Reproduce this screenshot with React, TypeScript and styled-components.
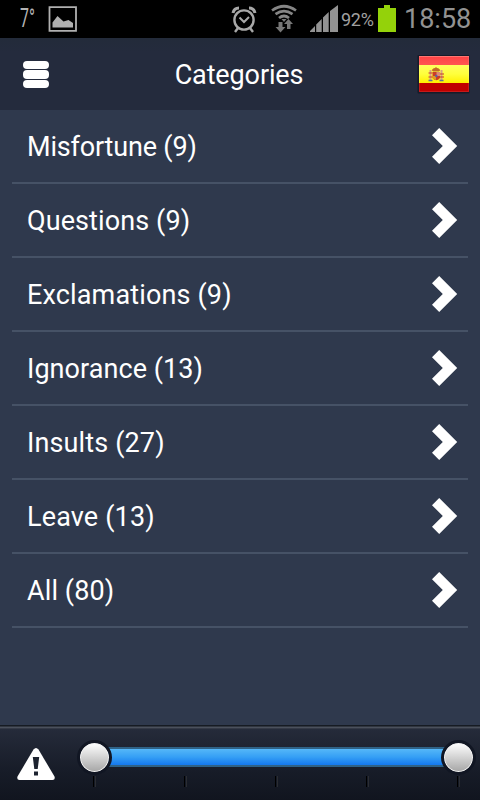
import React from 'react';
import styled, { createGlobalStyle } from 'styled-components';

const GlobalStyle = createGlobalStyle`
  * { box-sizing: border-box; }
  body { margin: 0; background: #2f394d; }
`;

const Screen = styled.div`
  width: 480px;
  height: 800px;
  display: flex;
  flex-direction: column;
  overflow: hidden;
  background: #2f394d;
  color: #fff;
  font-family: Roboto, "Liberation Sans", sans-serif;
`;

const StatusBar = styled.div`
  height: 38px;
  flex: none;
  display: flex;
  align-items: center;
  background: #000;
  color: #a0a0a0;
  svg { display: block; flex: none; }
`;

const StatusText = styled.span<{ $left: number; $width: number; $size: number; $spacing?: number }>`
  flex: none;
  margin-left: ${p => p.$left}px;
  width: ${p => p.$width}px;
  font-size: ${p => p.$size}px;
  letter-spacing: ${p => p.$spacing ?? 0}px;
  line-height: 36px;
  padding-top: 2px;
  white-space: nowrap;
`;

const Temperature = styled(StatusText)`
  padding-top: 0;
  color: #b4b4b4;
  transform: scaleX(0.64);
  transform-origin: left;
`;

const Clock = styled(StatusText)`
  padding-top: 0;
  color: #929292;
`;

const Spacer = styled.div`
  flex: 1;
`;

const Header = styled.header`
  height: 72px;
  flex: none;
  display: grid;
  grid-template-columns: 64px 1fr 64px;
  align-items: center;
  background: linear-gradient(#232b3a, #242b3d 20%, #242b3d);
`;

const MenuButton = styled.button`
  width: 26px;
  margin: 1px 0 0 23px;
  padding: 0;
  border: 0;
  background: none;
  display: flex;
  flex-direction: column;
  gap: 1px;
`;

const MenuBar = styled.span`
  height: 8.4px;
  border-radius: 4px;
  background: #fff;
`;

const Title = styled.h1`
  margin: 2px 0 0 -2px;
  text-align: center;
  font-size: 27px;
  font-weight: 400;
  line-height: 36px;
  letter-spacing: -0.12px;
`;

const FlagButton = styled.button`
  padding: 0;
  border: 0;
  background: none;
  svg { display: block; }
`;

const List = styled.ul`
  flex: 1;
  margin: 0;
  padding: 0 12px;
  list-style: none;
`;

const Row = styled.li`
  height: 74px;
  padding: 0 10px 0 15px;
  display: flex;
  align-items: center;
  justify-content: space-between;
  border-bottom: 2px solid #465266;
`;

const Label = styled.span<{ $spacing: number }>`
  font-size: 27px;
  line-height: 36px;
  padding-top: 1px;
  letter-spacing: ${p => p.$spacing}px;
  white-space: nowrap;
`;

const Footer = styled.footer`
  height: 75px;
  flex: none;
  display: flex;
  border-top: 1px solid #161b23;
  background: linear-gradient(#30353f 0 1px, #4a505c 1px 2px, #343946 2px 3px, #252b3a 3px, #171c28 45px, #11151f 74px);
  svg { display: block; flex: none; }
`;

const WarningIcon = styled.svg`
  margin: 21px 0 0 16px;
`;

const Slider = styled.div`
  flex: none;
  width: 399px;
  margin-left: 21px;
  padding-top: 13px;
`;

const Rail = styled.div`
  height: 36px;
  display: flex;
  align-items: center;
  justify-content: space-between;
`;

const Thumb = styled.div`
  flex: none;
  width: 35px;
  height: 35px;
  border: 3px solid #111623;
  border-radius: 50%;
  background: linear-gradient(#fff, #e0e0e0 35%, #a5a5a5) padding-box;
  box-shadow: inset 0 0 0 1px #f0f0f0;
  z-index: 1;
`;

const Fill = styled.div`
  flex: 1;
  height: 20px;
  margin: 0 -4px;
  border: solid #2f6286;
  border-width: 2px 0;
  background: linear-gradient(#55b7f8, #359ff5 50%, #1478ee);
`;

const Ticks = styled.div`
  display: flex;
  justify-content: space-between;
  margin: 1px 16px 0;
`;

const Tick = styled.span`
  width: 3px;
  height: 11px;
  border-left: 1px solid #000;
  border-right: 1px solid #2b2d32;
`;

const categories = [
  { name: 'Misfortune', count: 9, spacing: -0.18 },
  { name: 'Questions', count: 9, spacing: 0.1 },
  { name: 'Exclamations', count: 9, spacing: 0.14 },
  { name: 'Ignorance', count: 13, spacing: 0.06 },
  { name: 'Insults', count: 27, spacing: 0.13 },
  { name: 'Leave', count: 13, spacing: 0.15 },
  { name: 'All', count: 80, spacing: 0.1 },
];

const StatusIcons = () => (
  <svg width="109" height="38" viewBox="230 0 109 38" fill="none" stroke="#a8a8a8">
    <circle cx="244" cy="20" r="9.6" strokeWidth="2.4" />
    <path d="M239.500 17.500l4.500 4.500 5-5" strokeWidth="2" />
    <path d="M233 13q1-5 6-5M255 13q-1-5-6-5" strokeWidth="3" />
    <path d="M238 28l-3 4M250 28l3 4" strokeWidth="2.4" />
    <g stroke="#858585" strokeWidth="2.700">
      <path d="M272 10.500q12-8.500 24 0M275.500 14.200q8.500-6 17 0M279 18q5-4 10 0" />
    </g>
    <g fill="#777" stroke="none">
      <path d="M281.500 19h5l-2.500 3z" />
      <path d="M278.500 22h4v5h3l-5 5.500-5-5.500h3zM287 29h3.500v-5h2.500l-4.500-5-4.500 5h3z" />
      <path fill="#939393" d="M310 32v-1l5-5v6zM316.200 32v-7.500l5.500-5.500V32zM323 32V17.500l5.700-5.500V32zM330 32V11l8-6v27z" />
    </g>
  </svg>
);

const Flag = () => (
  <svg width="54" height="42" viewBox="0 0 54 42">
    <defs>
      <linearGradient id="gloss" x2="0" y2="1">
        <stop offset="0" stopColor="#ff7a72" /><stop offset=".15" stopColor="#ff4547" /><stop offset="1" stopColor="#ff5551" />
      </linearGradient>
      <linearGradient id="gold" x2="0" y2="1">
        <stop offset="0" stopColor="#ffff5e" /><stop offset=".5" stopColor="#ffff3c" /><stop offset="1" stopColor="#fff000" />
      </linearGradient>
    </defs>
    <rect x="1.500" y="2" width="52" height="38.500" rx="1" fill="#171b29" />
    <rect x="3" y="3" width="50" height="36" fill="#c00000" />
    <rect x="3" y="3" width="50" height="9" fill="url(#gloss)" />
    <rect x="3" y="12" width="50" height="18" fill="url(#gold)" />
    <path d="M3.500 3.500h49v35h-49z" fill="none" stroke="#fff" strokeOpacity=".1" />
    <g>
      <path d="M13.500 17h2v11h-2zM24.500 17h2v11h-2z" fill="#d9a286" />
      <path d="M12.500 20h4M24 21h4M12.500 24h4M24 24h4" stroke="#c33b2f" strokeWidth="1.200" />
      <path d="M12.500 27.500h4M23.500 27.500h4" stroke="#5a7199" strokeWidth="1.500" />
      <path d="M16 17.500q0-2 3-2.500l1-1 1 1q3 .5 3 2.500l-1 1h-6z" fill="#c26a28" />
      <path d="M16.500 19h7.500V25q-3.750 4.500-7.500 0z" fill="#cb3c28" />
      <path d="M20.500 19h3.500V23h-3.500z" fill="#dc8a76" />
      <path d="M16.500 23h3.500v4q-3-.5-3.500-2z" fill="#e19a20" />
      <circle cx="20.300" cy="23" r="1.200" fill="#5961a0" />
    </g>
  </svg>
);

export default function App() {
  return (
    <Screen>
      <GlobalStyle />
      <StatusBar>
        <Temperature $left={20} $width={28} $size={25}>7°</Temperature>
        <svg width="29" height="38" viewBox="48 0 29 38">
          <path d="M49.500 7.200h26.500v23.600H49.500z" fill="none" stroke="#b0b0b0" strokeWidth="1.800" />
          <path d="M52.500 27.500v-5l5-6.500 6 5.500 5-1.500 4.500 3v4.500z" fill="#b0b0b0" />
        </svg>
        <Spacer />
        <StatusIcons />
        <StatusText $left={2} $width={37} $size={18} $spacing={-0.25}>92%</StatusText>
        <svg width="18" height="38" viewBox="0 0 18 38">
          <path d="M6 5h6v3h6v24H0V8h6z" fill="#94d20a" />
        </svg>
        <Clock $left={8} $width={76} $size={27}>18:58</Clock>
      </StatusBar>
      <Header>
        <MenuButton aria-label="Menu"><MenuBar /><MenuBar /><MenuBar /></MenuButton>
        <Title>Categories</Title>
        <FlagButton aria-label="Language"><Flag /></FlagButton>
      </Header>
      <List>
        {categories.map(c => (
          <Row key={c.name}>
            <Label $spacing={c.spacing}>{c.name} ({c.count})</Label>
            <svg width="27" height="38" viewBox="0 0 27 38">
              <path d="M8.200 1l18 18-18 18-7.200-7.200L11.800 19 1 8.200z" fill="#fff" />
            </svg>
          </Row>
        ))}
      </List>
      <Footer>
        <WarningIcon width="40" height="34" viewBox="0 0 40 34">
          <path d="M17.500 2.500q2.500-3 5 0l16 27q1 3.500-2 3.500H3.500q-3 0-2-3.500z" fill="#fff" />
          <path d="M16.800 10h6.400l-1.500 12h-3.400zM18 24.500h4v4h-4z" fill="#1d2330" />
        </WarningIcon>
        <Slider>
          <Rail><Thumb /><Fill /><Thumb /></Rail>
          <Ticks><Tick /><Tick /><Tick /><Tick /><Tick /></Ticks>
        </Slider>
      </Footer>
    </Screen>
  );
}
